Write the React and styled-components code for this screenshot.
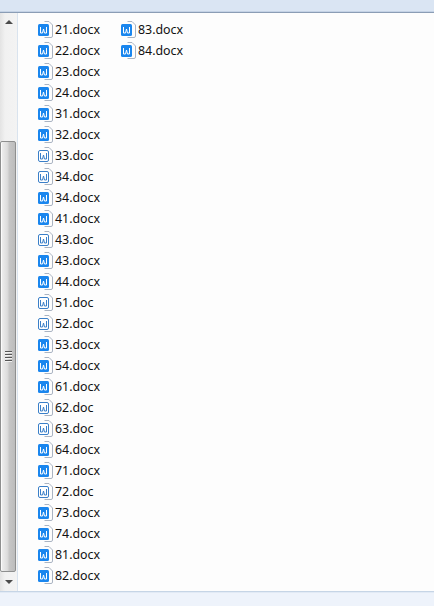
import React from 'react';
import styled, { createGlobalStyle } from 'styled-components';

const GlobalStyle = createGlobalStyle`
  html, body {
    margin: 0;
    padding: 0;
    background: #fff;
  }
`;

const Window = styled.div`
  width: 434px;
  height: 606px;
  display: flex;
  flex-direction: column;
  overflow: hidden;
  font-family: 'Noto Sans', 'Open Sans', sans-serif;
`;

const TopBar = styled.div`
  height: 12px;
  flex: none;
  background: #dae5f3;
  box-shadow: inset 0 -1px 0 #c5d3e6;
`;

const TopEdge = styled.div`
  height: 1px;
  flex: none;
  background: #8b9db5;
`;

const Body = styled.div`
  flex: 1;
  display: flex;
  min-height: 0;
  background: #fdfdfd;
`;

const Scrollbar = styled.div`
  width: 17px;
  flex: none;
  display: flex;
  flex-direction: column;
  background: linear-gradient(to right, #e3e3e3, #f1f1f1 30%, #f3f3f3);
  border-right: 1px solid #d9e3ee;
`;

const ArrowBox = styled.div`
  height: ${({ $tall }) => ($tall ? '19px' : '17px')};
  flex: none;
  display: flex;
  align-items: center;
  justify-content: center;
`;

const Arrow = styled.div`
  width: 0;
  height: 0;
  border-left: 4px solid transparent;
  border-right: 4px solid transparent;
  ${({ $down }) =>
    $down ? 'border-top: 4px solid #4a4a4a;' : 'border-bottom: 4px solid #4a4a4a;'}
`;

const Track = styled.div`
  flex: 1;
  display: flex;
  flex-direction: column;
  justify-content: flex-end;
`;

const Thumb = styled.div`
  height: 431px;
  box-sizing: border-box;
  margin: 0 1px 0 0;
  display: flex;
  flex-direction: column;
  align-items: center;
  justify-content: center;
  gap: 1px;
  border: 1px solid #8e8f8f;
  border-radius: 2px;
  background: linear-gradient(to right, #f0f0f0, #dcdcdc 45%, #c6c6c6 60%, #bcbcbc);
  box-shadow: inset 1px 0 0 #fbfbfb;
`;

const Grip = styled.div`
  width: 7px;
  height: 1px;
  background: #555;
  border-bottom: 1px solid #f2f2f2;
`;

const Files = styled.div`
  flex: 1;
  display: grid;
  grid-template-rows: repeat(27, 21px);
  grid-auto-flow: column;
  grid-auto-columns: 83px;
  padding: 6px 0 0 18px;
  align-content: start;
`;

const File = styled.div`
  display: flex;
  align-items: center;
  gap: 2px;
  font-size: 12.4px;
  line-height: 19px;
  color: #111;
  white-space: nowrap;
`;

const Footer = styled.div`
  height: 14px;
  flex: none;
  background: #eef3fb;
  border-top: 1px solid #c6d5e6;
  box-shadow: inset 0 1px 0 #e2eaf5;
`;

// wps style document icon, solid blue badge for docx and outlined one for doc
const DocIcon = ({ outlined }) => (
  <svg width="17" height="17" viewBox="0 0 17 17" style={{ flex: 'none' }}>
    <path d="M8.5 .5H13L16.5 4V15Q16.5 16.5 15 16.5H8.5" fill="#fdfdfd" stroke="#aab4c2" />
    <rect
      x={outlined ? 2.5 : 2}
      y={outlined ? 3.5 : 3}
      width={outlined ? 10 : 11}
      height={outlined ? 11 : 12}
      rx="1.5"
      fill={outlined ? '#fff' : '#1a86ee'}
      stroke={outlined ? '#3a7fc8' : 'none'}
    />
    <path
      d="M4.5 6V12H6.5L7.5 8L8.5 12H10.5V6"
      fill="none"
      stroke={outlined ? '#3a7fc8' : '#fff'}
      strokeWidth="1"
    />
  </svg>
);

const names = [
  '21.docx', '22.docx', '23.docx', '24.docx', '31.docx', '32.docx', '33.doc', '34.doc', '34.docx',
  '41.docx', '43.doc', '43.docx', '44.docx', '51.doc', '52.doc', '53.docx', '54.docx', '61.docx',
  '62.doc', '63.doc', '64.docx', '71.docx', '72.doc', '73.docx', '74.docx', '81.docx', '82.docx',
  '83.docx', '84.docx',
];

export default function App() {
  return (
    <>
      <GlobalStyle />
      <Window>
        <TopBar />
        <TopEdge />
        <Body>
          <Scrollbar>
            <ArrowBox><Arrow /></ArrowBox>
            <Track>
              <Thumb>
                <Grip />
                <Grip />
                <Grip />
                <Grip />
              </Thumb>
            </Track>
            <ArrowBox $tall><Arrow $down /></ArrowBox>
          </Scrollbar>
          <Files>
            {names.map((name) => (
              <File key={name}>
                <DocIcon outlined={name.endsWith('.doc')} />
                {name}
              </File>
            ))}
          </Files>
        </Body>
        <Footer />
      </Window>
    </>
  );
}
